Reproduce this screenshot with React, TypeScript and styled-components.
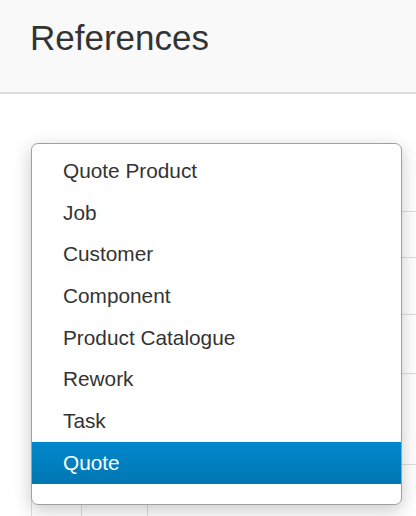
import React from 'react';
import styled, { createGlobalStyle } from 'styled-components';

const GlobalStyle = createGlobalStyle`
  html, body {
    margin: 0;
    padding: 0;
    background: #ffffff;
    font-family: 'Liberation Sans', Arial, sans-serif;
    color: #333333;
  }
`;

const options = [
  'Quote Product',
  'Job',
  'Customer',
  'Component',
  'Product Catalogue',
  'Rework',
  'Task',
  'Quote',
];

const rowHeights = [46, 46, 57, 59, 91, 60];

const App = () => {
  const selected = 'Quote';

  return (
    <Page>
      <GlobalStyle />
      <Header>
        <Title>References</Title>
      </Header>
      <Content>
        <Table>
          <tbody>
            {rowHeights.map((h, i) => (
              <Row key={i} style={{ height: h }}>
                <Cell $width={49} />
                <Cell $width={65} />
                <Cell />
              </Row>
            ))}
          </tbody>
        </Table>
        <Menu>
          {options.map((option) => (
            <Option key={option} $active={option === selected}>
              {option}
            </Option>
          ))}
        </Menu>
      </Content>
    </Page>
  );
};

const Page = styled.div`
  width: 416px;
  height: 516px;
  overflow: hidden;
`;

const Header = styled.header`
  height: 92px;
  background: #f9f9f9;
  border-bottom: 2px solid #dddddd;
  padding-left: 30px;
  box-sizing: content-box;
`;

const Title = styled.h1`
  margin: 0;
  padding-top: 18px;
  font-size: 35px;
  font-weight: 400;
  line-height: 40px;
  color: #333333;
`;

const Content = styled.div`
  position: relative;
  padding: 71px 0 0 31px;
`;

const Table = styled.table`
  border-collapse: collapse;
  width: 420px;
`;

const Row = styled.tr`
  border-bottom: 1px solid #dddddd;
`;

const Cell = styled.td<{ $width?: number }>`
  width: ${(p) => (p.$width ? `${p.$width}px` : 'auto')};
  border-left: 1px solid #dddddd;
  padding: 0;
`;

const Menu = styled.ul`
  position: absolute;
  left: 31px;
  top: 49px;
  width: 371px;
  margin: 0;
  padding: 6px 0 20px;
  list-style: none;
  background: #ffffff;
  border: 1px solid #a0a0a0;
  border-radius: 7px;
  box-shadow: 0 5px 18px rgba(0, 0, 0, 0.22);
  box-sizing: border-box;
  overflow: hidden;
`;

const Option = styled.li<{ $active?: boolean }>`
  height: 41.7px;
  line-height: 41.7px;
  padding-left: 31px;
  font-size: 20.8px;
  color: ${(p) => (p.$active ? '#ffffff' : '#333333')};
  background: ${(p) =>
    p.$active ? 'linear-gradient(to bottom, #0088cc, #0077b3)' : 'transparent'};
  white-space: nowrap;
`;

export default App;
